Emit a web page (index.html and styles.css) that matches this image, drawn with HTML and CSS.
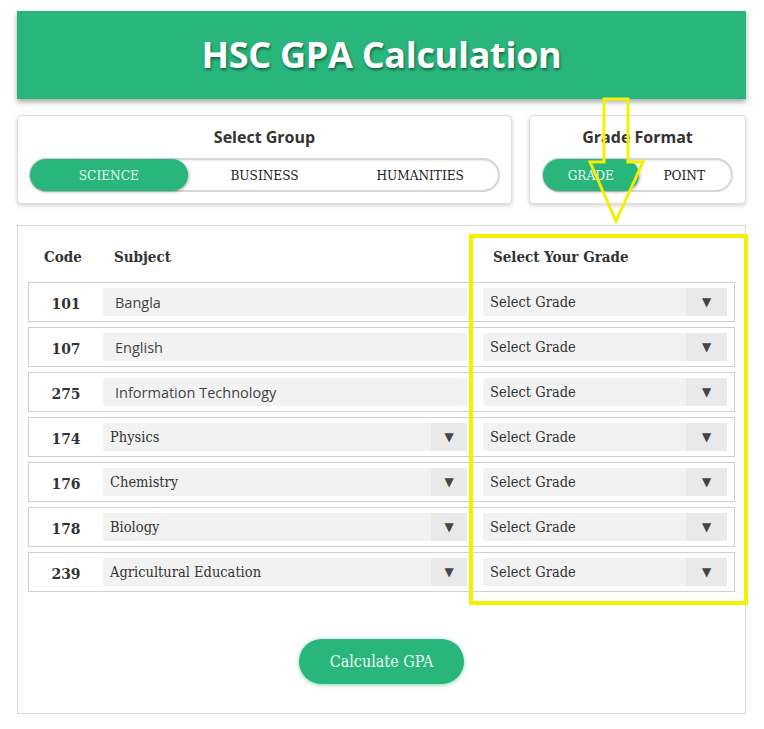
FILE: index.html
```html
<!DOCTYPE html>
<html>
<head>
<meta charset="utf-8">
<link rel="stylesheet" href="styles.css">
</head>
<body>
<div class="page">
  <header class="banner"><h1>HSC GPA Calculation</h1></header>

  <div class="options">
    <section class="card group-card">
      <h2>Select Group</h2>
      <div class="toggle toggle-group">
        <span class="seg active">SCIENCE</span>
        <span class="seg">BUSINESS</span>
        <span class="seg">HUMANITIES</span>
      </div>
    </section>
    <section class="card format-card">
      <h2>Grade Format</h2>
      <div class="toggle toggle-format">
        <span class="seg active">GRADE</span>
        <span class="seg">POINT</span>
      </div>
    </section>
  </div>

  <main class="calc">
    <div class="thead">
      <span class="th-code">Code</span>
      <span class="th-subject">Subject</span>
      <span class="th-grade">Select Your Grade</span>
    </div>

    <div class="row">
      <span class="code">101</span>
      <span class="field plain">Bangla</span>
      <span class="field select grade"><span class="val">Select Grade</span><span class="arrow">▼</span></span>
    </div>
    <div class="row">
      <span class="code">107</span>
      <span class="field plain">English</span>
      <span class="field select grade"><span class="val">Select Grade</span><span class="arrow">▼</span></span>
    </div>
    <div class="row">
      <span class="code">275</span>
      <span class="field plain">Information Technology</span>
      <span class="field select grade"><span class="val">Select Grade</span><span class="arrow">▼</span></span>
    </div>
    <div class="row">
      <span class="code">174</span>
      <span class="field select subj"><span class="val">Physics</span><span class="arrow">▼</span></span>
      <span class="field select grade"><span class="val">Select Grade</span><span class="arrow">▼</span></span>
    </div>
    <div class="row">
      <span class="code">176</span>
      <span class="field select subj"><span class="val">Chemistry</span><span class="arrow">▼</span></span>
      <span class="field select grade"><span class="val">Select Grade</span><span class="arrow">▼</span></span>
    </div>
    <div class="row">
      <span class="code">178</span>
      <span class="field select subj"><span class="val">Biology</span><span class="arrow">▼</span></span>
      <span class="field select grade"><span class="val">Select Grade</span><span class="arrow">▼</span></span>
    </div>
    <div class="row">
      <span class="code">239</span>
      <span class="field select subj"><span class="val">Agricultural Education</span><span class="arrow">▼</span></span>
      <span class="field select grade"><span class="val">Select Grade</span><span class="arrow">▼</span></span>
    </div>

    <div class="actions">
      <button class="calc-btn">Calculate GPA</button>
    </div>
  </main>

  <svg class="annotation" width="764" height="729" viewBox="0 0 764 729">
    <rect x="471" y="236" width="275" height="367" fill="none" stroke="#f5ef00" stroke-width="4"/>
    <polygon points="604,99 628,99 628,162 643,162 616,221 590,162 604,162" fill="none" stroke="#f5ef00" stroke-width="3" stroke-linejoin="miter"/>
  </svg>
</div>
</body>
</html>
```

FILE: styles.css
```css
:root {
  --green: #29b67b;
  --slab: "DejaVu Serif Condensed", "DejaVu Serif", serif;
  --sans: "Open Sans", "Noto Sans", sans-serif;
}

html, body {
  margin: 0;
  padding: 0;
  background: #fff;
}

.page {
  position: relative;
  width: 729px;
  padding: 11px 0 0 17px;
}

.banner {
  height: 88px;
  background: var(--green);
  box-shadow: 0 3px 5px rgba(0, 0, 0, 0.35);
  display: flex;
  align-items: center;
  justify-content: center;
}

.banner h1 {
  margin: 0 0 2px;
  font-family: var(--sans);
  font-weight: 700;
  font-size: 36px;
  color: #fff;
  letter-spacing: -0.3px;
  text-shadow: 1px 2px 3px rgba(0, 0, 0, 0.45);
}

.options {
  display: flex;
  gap: 17px;
  margin-top: 16px;
}

.card {
  border: 1px solid #dcdcdc;
  border-radius: 4px;
  box-shadow: 0 2px 4px rgba(0, 0, 0, 0.16);
  height: 89px;
  box-sizing: border-box;
  display: flex;
  flex-direction: column;
  align-items: center;
  background: #fff;
}

.group-card { width: 495px; }
.format-card { width: 217px; }

.card h2 {
  margin: 10px 0 0;
  font-family: var(--sans);
  font-weight: 700;
  font-size: 16px;
  color: #333;
  line-height: 22px;
}

.toggle {
  margin-top: 10px;
  height: 34px;
  box-sizing: border-box;
  border: 2px solid #d6d6d6;
  border-radius: 17px;
  display: flex;
  align-items: stretch;
  box-shadow: inset 0 1px 2px rgba(0, 0, 0, 0.08);
}

.toggle-group { width: 471px; }
.toggle-format { width: 191px; }

.seg {
  flex: 1;
  display: flex;
  align-items: center;
  justify-content: center;
  font-family: var(--slab);
  font-size: 13.5px;
  color: #222;
  border-radius: 16px;
  margin: -1px;
}

.seg.active {
  background: var(--green);
  color: #e8f8f0;
  box-shadow: 1px 1px 3px rgba(0, 0, 0, 0.3);
}

.calc {
  margin-top: 21px;
  border: 1px solid #d6d6d6;
  padding: 0 10px 0 10px;
  height: 489px;
  box-sizing: border-box;
}

.thead {
  display: flex;
  align-items: flex-start;
  height: 56px;
  padding-top: 22px;
  box-sizing: border-box;
  line-height: 18px;
  font-family: var(--slab);
  font-weight: 700;
  font-size: 15px;
  color: #333;
}

.th-code { width: 86px; padding-left: 16px; box-sizing: border-box; }
.th-subject { width: 379px; }

.row {
  display: flex;
  align-items: center;
  height: 40px;
  box-sizing: border-box;
  border: 1px solid #cfcfcf;
  padding: 0 7px 0 0;
  margin-bottom: 5px;
}

.code {
  width: 74px;
  text-align: center;
  font-family: var(--slab);
  font-weight: 700;
  font-size: 15.5px;
  color: #333;
  padding-top: 2px;
}

.field {
  height: 28px;
  background: #f2f2f2;
  border-radius: 2px;
  display: flex;
  align-items: center;
  box-sizing: border-box;
}

.field.plain,
.field.subj {
  width: 364px;
  margin-right: 16px;
}

.field.plain {
  padding-left: 12px;
  font-family: var(--sans);
  font-size: 14.5px;
  color: #444;
}

.field.grade { flex: 1; }

.field .val {
  flex: 1;
  padding-left: 7px;
  font-family: var(--slab);
  font-size: 14.5px;
  color: #333;
  white-space: nowrap;
}

.field .arrow {
  width: 36px;
  height: 100%;
  background: #e9e9e9;
  display: flex;
  align-items: center;
  justify-content: center;
  font-size: 12px;
  color: #444;
  font-family: "DejaVu Sans", sans-serif;
}

.field.grade .arrow { width: 41px; }

.actions {
  display: flex;
  justify-content: center;
  margin-top: 47px;
}

.calc-btn {
  width: 165px;
  height: 45px;
  border: none;
  border-radius: 23px;
  background: var(--green);
  color: #eefaf4;
  font-family: var(--slab);
  font-size: 16px;
  box-shadow: 0 1px 4px rgba(41, 182, 123, 0.6);
  cursor: pointer;
}

.annotation {
  position: absolute;
  left: 0;
  top: 0;
  pointer-events: none;
}
```
